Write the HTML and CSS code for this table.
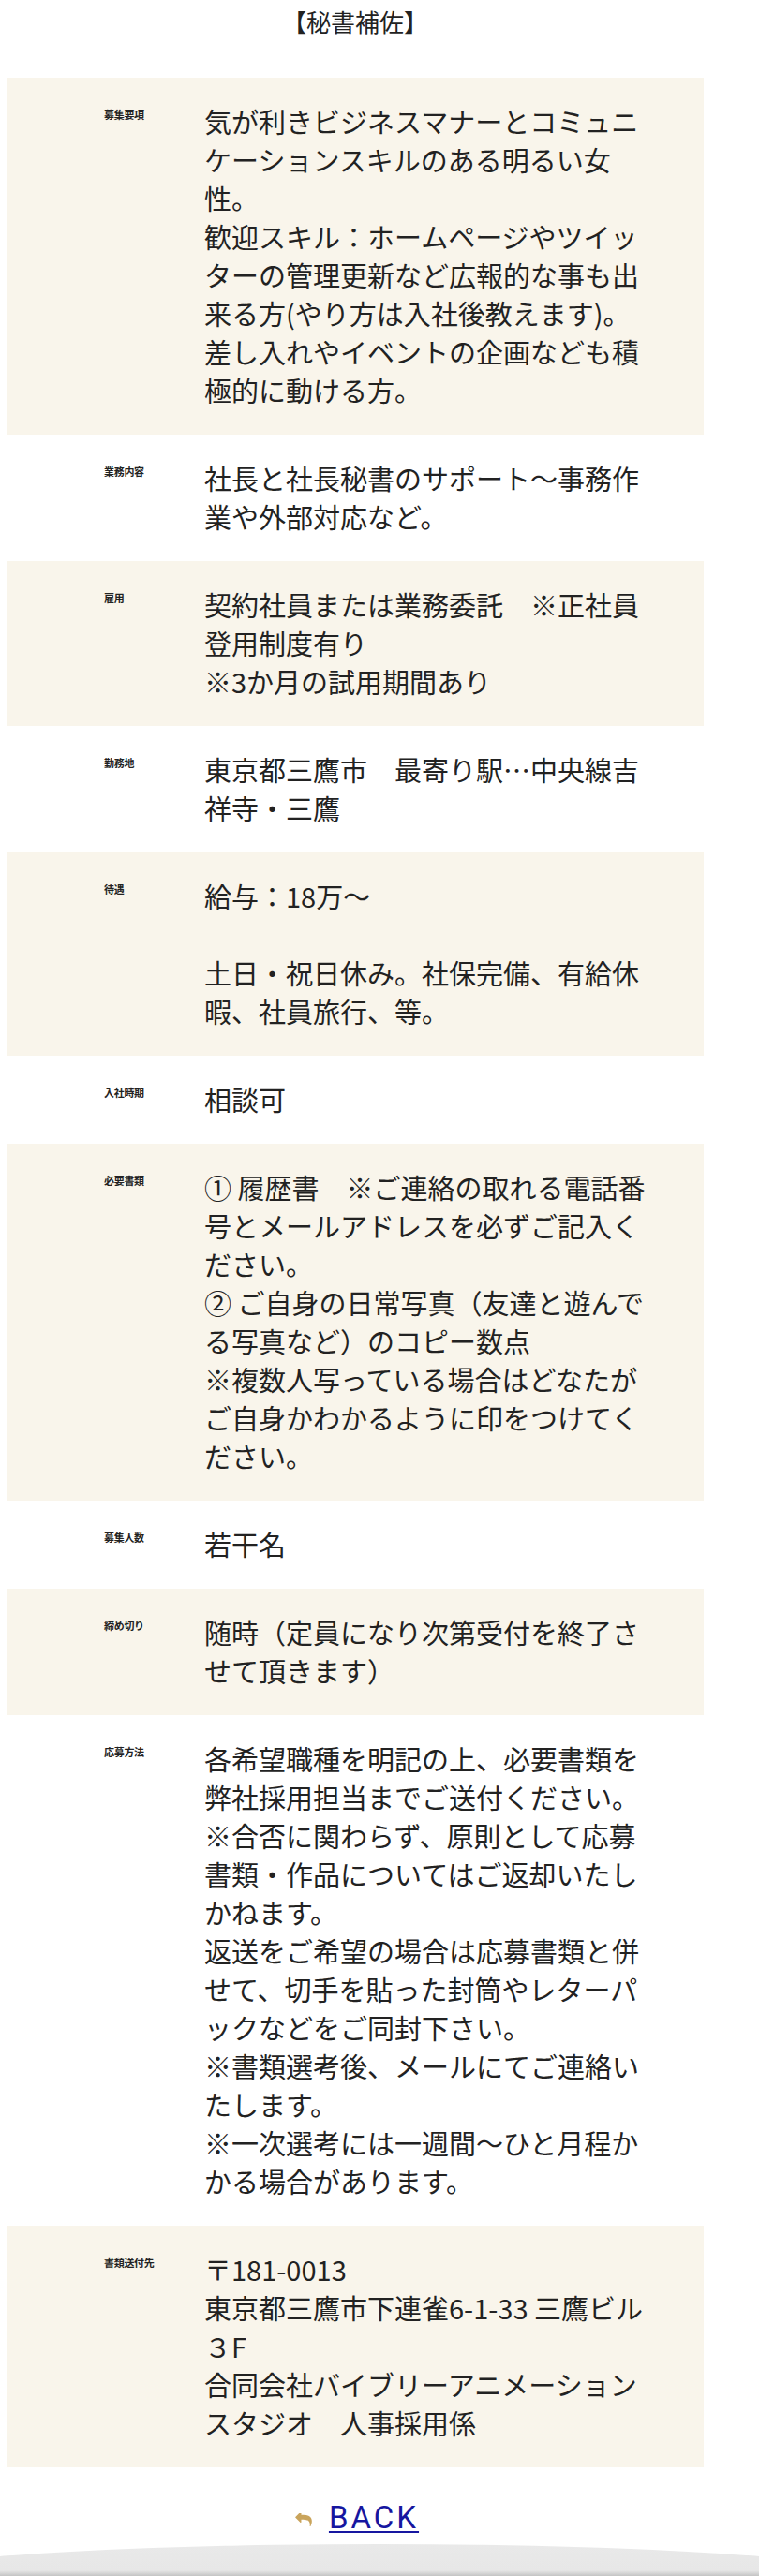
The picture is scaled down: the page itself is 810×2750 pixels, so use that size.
FILE: index.html
```html
<!DOCTYPE html>
<html lang="ja">
<head>
<meta charset="utf-8">
<title>秘書補佐</title>
<link rel="stylesheet" href="styles.css">
</head>
<body>
<main class="page">
  <h1 class="title">【秘書補佐】</h1>
  <dl class="spec">
    <div class="row alt">
      <dt>募集要項</dt>
      <dd>気が利きビジネスマナーとコミュニケーションスキルのある明るい女性。<br>歓迎スキル：ホームページやツイッターの管理更新など広報的な事も出来る方(やり方は入社後教えます)。<br>差し入れやイベントの企画なども積極的に動ける方。</dd>
    </div>
    <div class="row">
      <dt>業務内容</dt>
      <dd>社長と社長秘書のサポート〜事務作業や外部対応など。</dd>
    </div>
    <div class="row alt">
      <dt>雇用</dt>
      <dd>契約社員または業務委託　※正社員登用制度有り<br>※3か月の試用期間あり</dd>
    </div>
    <div class="row">
      <dt>勤務地</dt>
      <dd>東京都三鷹市　最寄り駅…中央線吉祥寺・三鷹</dd>
    </div>
    <div class="row alt">
      <dt>待遇</dt>
      <dd>給与：18万〜<br><br>土日・祝日休み。社保完備、有給休暇、社員旅行、等。</dd>
    </div>
    <div class="row">
      <dt>入社時期</dt>
      <dd>相談可</dd>
    </div>
    <div class="row alt">
      <dt>必要書類</dt>
      <dd>① 履歴書　※ご連絡の取れる電話番号とメールアドレスを必ずご記入ください。<br>② ご自身の日常写真（友達と遊んでる写真など）のコピー数点<br>※複数人写っている場合はどなたがご自身かわかるように印をつけてください。</dd>
    </div>
    <div class="row">
      <dt>募集人数</dt>
      <dd>若干名</dd>
    </div>
    <div class="row alt">
      <dt>締め切り</dt>
      <dd>随時（定員になり次第受付を終了させて頂きます）</dd>
    </div>
    <div class="row">
      <dt>応募方法</dt>
      <dd>各希望職種を明記の上、必要書類を弊社採用担当までご送付ください。<br>※合否に関わらず、原則として応募書類・作品についてはご返却いたしかねます。<br>返送をご希望の場合は応募書類と併せて、切手を貼った封筒やレターパックなどをご同封下さい。<br>※書類選考後、メールにてご連絡いたします。<br>※一次選考には一週間〜ひと月程かかる場合があります。</dd>
    </div>
    <div class="row alt">
      <dt>書類送付先</dt>
      <dd>〒181-0013<br>東京都三鷹市下連雀6-1-33 三鷹ビル３F<br>合同会社バイブリーアニメーションスタジオ　人事採用係</dd>
    </div>
  </dl>
  <p class="back">
    <svg class="back-icon" viewBox="0 200 1792 1420" aria-hidden="true"><path d="M1792 1120q0 166-127 451-3 7-10.5 24t-13.5 30-13 22q-12 17-28 17-15 0-23.5-10t-8.5-25q0-9 2.5-26.5t2.5-23.5q5-68 5-123 0-101-17.5-181t-48.5-138.5-80-101-105.5-69.5-133-42.5-154-21.5-175.5-6h-224v256q0 26-19 45t-45 19-45-19l-512-512q-19-19-19-45t19-45l512-512q19-19 45-19t45 19 19 45v256h224q713 0 875 403 53 134 53 333z"/></svg>
    <a class="back-link" href="#">BACK</a>
  </p>
</main>
<footer class="foot"></footer>
</body>
</html>
```

FILE: styles.css
```css
html, body {
  margin: 0;
  padding: 0;
  background: #ffffff;
}

body {
  font-family: "Noto Sans CJK JP", "Noto Sans", sans-serif;
  color: #222222;
  overflow-x: hidden;
}

.page {
  width: 744px;
  margin-left: 7px;
}

.title {
  margin: 0;
  padding-top: 6px;
  font-size: 26px;
  line-height: 34px;
  font-weight: 400;
  text-align: center;
  height: 77px;
}

.spec {
  margin: 0;
}

.row {
  display: grid;
  grid-template-columns: 107px 480px;
  padding: 26px 0 27px 104px;
}

.row.alt {
  background: #f9f5eb;
}

.row dt {
  font-size: 11px;
  font-weight: 700;
  line-height: 16px;
  margin-top: 5px;
  letter-spacing: -0.3px;
}

.row dd {
  margin: 0;
  font-size: 29px;
  line-height: 41px;
}

.back {
  margin: 34px 0 0;
  display: flex;
  justify-content: center;
  align-items: center;
  gap: 18px;
  height: 40px;
  padding-left: 4px;
}

.back-icon {
  width: 18px;
  height: 14px;
  fill: #c9a45c;
  margin-top: 4px;
}

.back-link {
  font-family: Roboto, "Liberation Sans", sans-serif;
  font-size: 33px;
  line-height: 40px;
  letter-spacing: 3px;
  color: #1616a0;
  text-decoration: underline;
  text-decoration-thickness: 2px;
  text-underline-offset: 3px;
}

.foot {
  margin-top: 8px;
  height: 60px;
  background: linear-gradient(#e9e9e9 0, #e7e7e7 28px, #c4c4c4 34px, #bdbdbd 60px);
  clip-path: ellipse(567px 43px at 50% 43px);
}
```
